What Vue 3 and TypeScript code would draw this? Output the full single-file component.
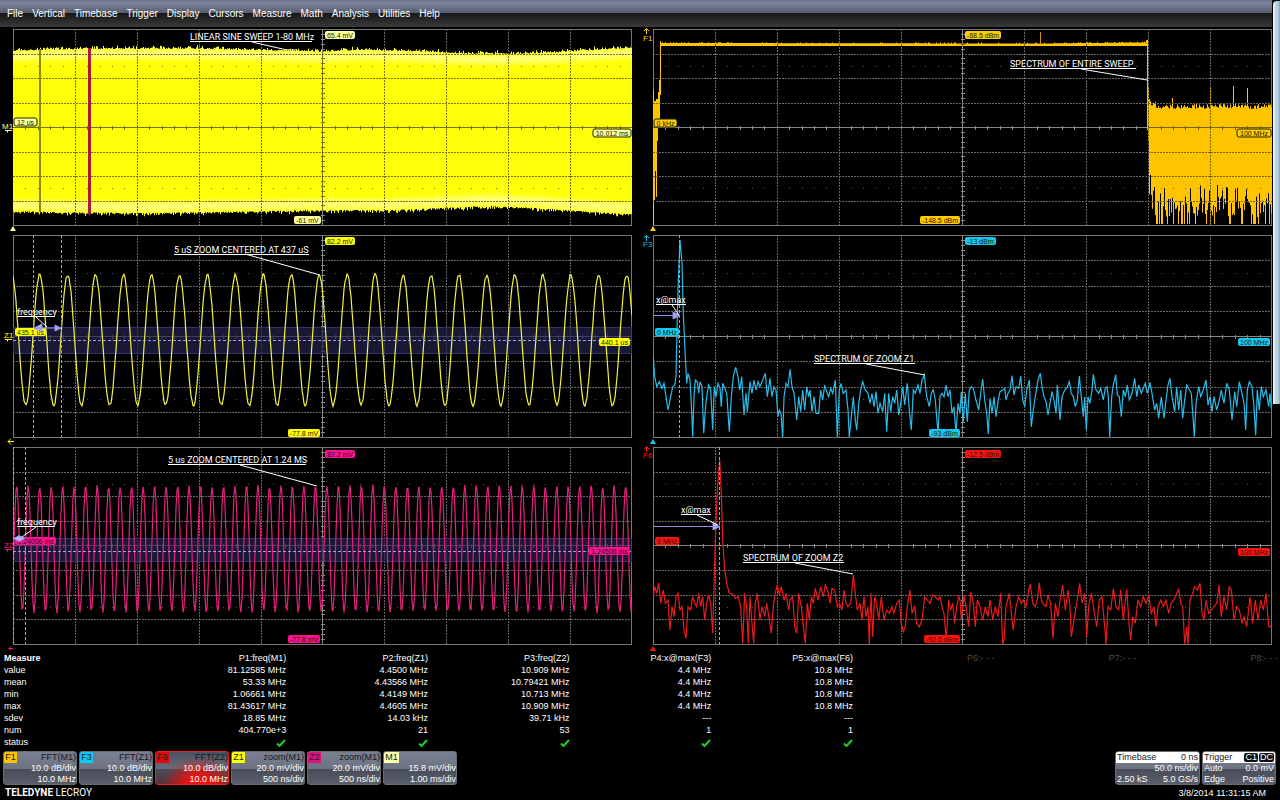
<script setup lang="ts">
interface Tag { x: number; y: number; w: number; text: string; outlined?: boolean }
interface Note { x: number; y: number; w: number; text: string; line: string }
interface Panel {
  id: string
  view: string
  left: number
  top: number
  height: number
  color: string
  tagFill: string
  tags: Tag[]
  notes: Note[]
  trace?: string
  fill?: string
  marker: string
  markerShape: string
  origin: string
  cursors?: number[]
  band?: { y: number; h: number; mid: number }
  arrows?: string[]
}

const WIDTH = 619

function noise(seed: number) {
  let s = seed
  return () => {
    s = (s * 16807) % 2147483647
    return s / 2147483647
  }
}

function at(points: number[][], x: number): number {
  for (let i = 1; i < points.length; i++) {
    const [x0, y0] = points[i - 1]
    const [x1, y1] = points[i]
    if (x <= x1) return y0 + ((y1 - y0) * (x - x0)) / (x1 - x0)
  }
  return points[points.length - 1][1]
}

function sine(period: number, peak: number, mid: number, amp: number, seed: number): string {
  const rand = noise(seed)
  const pts: string[] = []
  for (let x = 13; x <= 632; x += 1) {
    const c = Math.cos((2 * Math.PI * (x - peak)) / period)
    const y = mid - amp * c + (rand() - 0.5) * 3
    pts.push(x + ' ' + y.toFixed(1))
  }
  return 'M' + pts.join('L')
}

// Samples are stored at three units per pixel, measured from an origin.
function spectrum(data: string, ox: number, oy: number): string {
  return 'M' + data.trim().split(/\s+/).map((p) => {
    const [x, y] = p.split(',').map(Number)
    return (ox + x / 3).toFixed(1) + ' ' + (oy + y / 3).toFixed(1)
  }).join('L')
}

const envTop = [[13, 50], [40, 49], [90, 48], [200, 48], [240, 49], [290, 50], [322, 51], [360, 49], [400, 50], [430, 51], [470, 53], [510, 53], [545, 52], [580, 50], [632, 47]]
const envBottom = [[13, 212], [60, 213], [150, 214], [200, 213], [260, 212], [322, 211], [390, 211], [440, 209], [490, 207], [540, 209], [580, 212], [632, 215]]

function envelope(): string {
  const rand = noise(77)
  let d = 'M13 127'
  for (let x = 13; x < 632; x++) d += 'V' + (at(envTop, x) - rand() * rand() * 4 + 1).toFixed(1) + 'H' + (x + 1)
  for (let x = 632; x > 13; x--) d += 'V' + (at(envBottom, x) + rand() * rand() * 4 - 1).toFixed(1) + 'H' + (x - 1)
  return d + 'Z'
}

function glow(points: number[][], dy: number): string {
  return 'M' + points.map(([x, y]) => x + ' ' + (y + dy)).join('L')
}
const glowTop = glow(envTop, 6)
const glowBottom = glow(envBottom, -7)

function sweepSpectrum(): string {
  const rand = noise(4242)
  let d = 'M653 222V90H654V101H656V99H658V92H659V80H660V41H661V43'
  for (let x = 661; x < 1146; x++) d += 'V' + (43 - at([[661, 0], [1040, -0.5], [1147, 0.6]], x) - (rand() > 0.85 ? 0.8 : 0)).toFixed(1) + 'H' + (x + 1)
  d += 'V40H1147V54H1148V88H1149V99H1150'
  for (let x = 1150; x < 1272; x++) {
    let y = 109 - rand() * 5 - (x < 1156 ? 3 : 0)
    if (x === 1172) y = 98
    if (x === 1210 || x === 1247) y = 88
    if (x === 1233) y = 86
    d += 'V' + y.toFixed(1) + 'H' + (x + 1)
  }
  for (let x = 1272; x > 1152; x--) {
    const r = rand()
    const y = r > 0.8 ? 224 : r > 0.4 ? 203 + rand() * 14 : 184 + rand() * 20
    d += 'V' + y.toFixed(1) + 'H' + (x - 1)
  }
  d += 'V195H1151V175H1150V194H1149V142H1148V90H1147V46'
  d += 'H661V47H660V120H658V141H657V197H656V171H655V200H654V225H653Z'
  return d
}

const blue = `280,380 284,440 290,470 298,455 306,475 312,460 318,500 324,540 332,500 338,470 344,465 348,440 351,300 355,150 360,30 366,100 370,250 376,380 380,460 384,430 390,450 394,520 398,620 402,500 406,450 412,455 416,490 420,455 426,470 431,610 436,540 440,500 446,465 452,480 458,600 463,470 468,500 474,460 480,475 484,530 488,460 494,475 500,490 508,605 514,500 520,440 527,412 534,440 539,480 545,440 552,555 558,490 562,545 570,455 576,490 582,450 588,480 594,455 600,470 608,450 616,430 622,500 630,445 636,500 642,470 648,480 654,560 658,540 663,550 668,622 672,500 678,460 684,470 690,418 696,470 702,490 710,570 716,500 722,545 728,480 734,540 740,470 746,500 750,480 756,545 762,500 768,550 776,550 782,480 788,510 794,465 800,485 806,500 812,475 818,490 826,450 832,622 838,480 843,460 850,490 858,480 864,540 868,622 874,560 880,500 886,570 890,600 896,520 902,480 908,455 916,480 924,490 930,520 936,490 942,530 948,485 954,550 960,520 968,545 974,490 980,605 986,490 992,545 998,500 1004,520 1010,480 1016,555 1022,520 1028,470 1034,525 1042,460 1048,540 1054,600 1060,480 1066,490 1074,465 1080,490 1086,450 1093,435 1100,500 1108,530 1114,490 1120,480 1126,510 1134,610 1140,500 1146,490 1152,500 1158,465 1164,500 1170,480 1176,550 1182,530 1188,610 1194,520 1200,550
1204,485 1210,575 1216,490 1222,575 1228,480 1234,470 1240,475 1248,510 1256,540 1262,490 1268,447 1274,510 1280,550 1285,612 1290,505 1296,550 1302,500 1308,560 1314,515 1320,485 1328,480 1334,475 1338,510 1344,490 1350,480 1356,437 1362,495 1368,470 1376,475 1382,438 1388,510 1394,530 1400,480 1408,450 1414,590 1420,540 1426,500 1434,450 1441,430 1446,470 1452,500 1458,515 1464,555 1470,520 1476,485 1482,510 1488,550 1492,465 1500,570 1506,500 1514,480 1520,475 1528,455 1534,490 1540,500 1546,530 1552,510 1558,438 1564,500 1570,560 1574,500 1579,600 1584,500 1590,520 1596,480 1600,433 1608,480 1616,490 1622,475 1630,510 1636,475 1641,470 1645,500 1649,622 1655,500 1660,465 1667,434 1672,495 1678,500 1684,560 1690,480 1696,500 1702,465 1708,510 1716,490 1724,445 1730,500 1736,465 1744,490 1750,475 1756,460 1762,490 1770,458 1776,490 1784,540 1790,520 1796,565 1804,500 1812,565 1818,510 1824,465 1830,445 1836,500 1844,545 1850,470 1856,540 1862,480 1868,565 1874,510 1880,465 1886,475 1894,490 1899,560 1903,620 1908,520 1916,470 1922,500 1930,480 1938,450 1944,525 1950,500 1956,545 1962,500 1970,540 1978,510 1984,480 1992,520 2000,460 2008,480 2016,570 2024,485 2030,530 2038,455 2046,490 2052,520 2057,600 2062,480 2068,455 2076,470 2081,520 2087,616 2092,480 2098,540 2104,470 2110,500 2118,480 2126,530 2130,490 2134,535`

const red = `280,470 284,440 290,460 296,428 302,490 310,450 316,490 324,480 330,570 336,500 342,530 348,470 354,460 360,510 366,500 372,570 378,595 384,500 392,510 398,470 404,490 410,500 416,460 422,500 428,470 434,540 440,490 446,465 452,490 458,580 462,440 466,300 472,150 479,60 484,160 488,300 494,390 500,430 508,460 518,462 526,475 534,470 542,500 548,610 554,460 560,500 565,610 570,470 575,540 581,610 586,490 592,460 600,540 606,500 614,530 620,490 628,540 634,580 640,500 646,460 652,434 658,465 664,440 672,480 678,460 686,510 690,480 698,470 704,560 710,580 716,460 724,500 730,560 736,610 742,490 748,540 754,470 760,490 766,445 774,480 782,440 790,470 796,435 804,455 810,490 816,445 824,450 832,500 838,490 846,510 852,450 858,490 864,500 872,490 880,405 886,460 892,510 900,490 906,540 912,470 918,530 924,500 928,612 933,460 938,590 944,470 950,490 956,540 964,470 972,540 980,510 988,520 996,500 1002,520 1010,490 1018,480 1024,550 1030,575 1036,560 1042,500 1050,450 1056,520 1064,500 1070,550 1078,560 1086,540 1094,470 1102,480 1110,490 1118,465 1126,470 1134,480 1140,470 1146,500 1152,520 1159,600 1166,480 1172,510 1178,490 1184,550 1190,500 1196,470 1200,480
1204,540 1212,465 1218,500 1226,560 1232,455 1240,490 1246,560 1252,480 1260,500 1268,540 1276,500 1284,530 1290,480 1298,540 1306,500 1314,530 1322,460 1328,612 1332,600 1338,500 1348,460 1354,520 1360,570 1368,500 1376,470 1384,490 1390,480 1398,500 1406,450 1411,432 1418,490 1426,500 1432,480 1438,428 1444,480 1452,495 1458,500 1464,465 1472,490 1479,595 1486,490 1494,530 1500,480 1508,435 1516,510 1524,450 1530,500 1534,590 1542,540 1550,490 1559,430 1566,490 1574,460 1580,590 1586,500 1594,460 1602,510 1610,560 1618,480 1626,470 1634,560 1638,612 1644,500 1652,510 1660,446 1668,500 1676,510 1682,450 1690,540 1700,448 1708,560 1712,600 1718,530 1726,550 1734,480 1742,500 1750,470 1758,490 1766,465 1774,520 1782,500 1788,560 1794,500 1802,480 1810,500 1818,480 1826,520 1834,490 1842,480 1850,460 1856,448 1862,490 1868,500 1874,612 1880,560 1884,612 1890,480 1898,460 1904,440 1912,450 1920,430 1926,520 1932,540 1938,480 1946,520 1954,510 1962,500 1970,490 1977,435 1984,530 1992,470 2000,510 2008,440 2014,450 2022,540 2030,500 2038,510 2046,550 2052,530 2060,560 2070,470 2078,550 2086,480 2094,540 2102,480 2110,510 2118,460 2126,560 2134,560`

function gridLines(p: Panel): string {
  let d = ''
  for (let i = 1; i < 10; i++) if (i !== 5) d += `M${Math.round(p.left + i * 61.9)}.5 ${p.top}v${p.height}`
  for (let j = 1; j < 8; j++) if (j !== 4) d += `M${p.left} ${Math.round(p.top + (j * p.height) / 8)}.5h${WIDTH}`
  return d
}

function axes(p: Panel): string {
  const cx = Math.round(p.left + 309) + 0.5
  const cy = Math.floor(p.top + p.height / 2) + 0.5
  let d = `M${cx} ${p.top}v${p.height}M${p.left} ${cy}h${WIDTH}`
  for (let i = 1; i < 50; i++) if (i % 5) d += `M${Math.round(p.left + i * 12.38)}.5 ${cy - 2}v4`
  for (let j = 1; j < 40; j++) if (j % 5) d += `M${cx - 2} ${Math.round(p.top + (j * p.height) / 40)}.5h4`
  return d
}

function dots(p: Panel): string {
  let d = ''
  for (const k of [1.5, 6.5]) {
    const y = Math.round(p.top + (p.height * k) / 8)
    for (let i = 1; i < 50; i++) if (i % 5) d += `M${Math.round(p.left + i * 12.38)} ${y}.5h1`
  }
  return d
}

const up = (y: number) => `M646.5 ${y + 6}v-5M644 ${y + 3}l2.5 -2.5l2.5 2.5`
const foot = (x: number, y: number) => `M${x} ${y}l3 5h-6z`

const panels: Panel[] = [
  {
    id: 'M1', view: '0 28 640 206', left: 13, top: 29, height: 196, color: '#ffff0a', tagFill: '#ffff9c',
    fill: envelope(), marker: '2,129', markerShape: 'M5 130.5h7M7.5 130.5v2', origin: foot(13, 226),
    tags: [
      { x: 325, y: 31, w: 30, text: '65.4 mV' }, { x: 294, y: 216, w: 27, text: '-61 mV' },
      { x: 14, y: 118, w: 23, text: '12 us', outlined: true }, { x: 593, y: 129, w: 38, text: '10.012 ms', outlined: true },
    ],
    notes: [{ x: 190, y: 40, w: 122, text: 'LINEAR SINE SWEEP 1-80 MHz', line: 'M252 42L287 50H296' }],
  },
  {
    id: 'F1', view: '640 28 640 206', left: 653, top: 29, height: 196, color: '#ffc400', tagFill: '#ffcc00',
    fill: sweepSpectrum(), marker: '643,41', markerShape: up(28), origin: foot(653, 226),
    tags: [
      { x: 965, y: 31, w: 36, text: '-68.5 dBm' }, { x: 920, y: 216, w: 40, text: '-148.5 dBm' },
      { x: 654, y: 119, w: 23, text: '0 kHz', outlined: true }, { x: 1237, y: 129, w: 34, text: '100 MHz', outlined: true },
    ],
    notes: [{ x: 1010, y: 67, w: 126, text: 'SPECTRUM OF ENTIRE SWEEP', line: 'M1081 69L1147 80' }],
  },
  {
    id: 'Z1', view: '0 234 640 212', left: 13, top: 235, height: 202, color: '#f4f440', tagFill: '#ffff00',
    trace: sine(27.95, 39.7, 340, 65, 11), marker: '4,338', markerShape: 'M5 339.5h7M7.5 339.5v2', origin: 'M14 441.5h-6M11 438.5l-3 3l3 3',
    cursors: [33, 61], band: { y: 327, h: 27, mid: 340 },
    arrows: ['M34 328H61M42 324L34 328L42 332ZM55 325L61 328L55 331Z'],
    tags: [
      { x: 325, y: 237, w: 30, text: '82.2 mV' }, { x: 288, y: 429, w: 32, text: '-77.8 mV' },
      { x: 15, y: 328, w: 31, text: '435.1 us' }, { x: 599, y: 338, w: 31, text: '440.1 us' },
    ],
    notes: [
      { x: 174, y: 253, w: 135, text: '5 uS ZOOM CENTERED AT 437 uS', line: 'M245 254L320 275' },
      { x: 17, y: 315, w: 38, text: 'frequency', line: 'M36 317L47 327' },
    ],
  },
  {
    id: 'F3', view: '640 234 640 212', left: 653, top: 235, height: 202, color: '#28bce8', tagFill: '#12c8f0',
    trace: spectrum(blue, 560, 230), marker: '643,247', markerShape: up(235), origin: foot(653, 439),
    cursors: [679], arrows: ['M653 315.5H680M673 312L680 315.5L673 319Z'],
    tags: [
      { x: 965, y: 237, w: 31, text: '-13 dBm' }, { x: 929, y: 429, w: 31, text: '-93 dBm' },
      { x: 655, y: 328, w: 24, text: '0 MHz' }, { x: 1238, y: 338, w: 32, text: '100 MHz' },
    ],
    notes: [
      { x: 814, y: 362, w: 101, text: 'SPECTRUM OF ZOOM Z1', line: 'M866 364L925 375' },
      { x: 656, y: 303, w: 30, text: 'x@max', line: 'M672 305L679 315' },
    ],
  },
  {
    id: 'Z2', view: '0 446 640 206', left: 13, top: 447, height: 197, color: '#e4207e', tagFill: '#ff1090',
    trace: sine(11.49, 16.7, 549, 63, 29), marker: '4,548', markerShape: 'M5 549.5h7M7.5 549.5v2', origin: 'M13 648.5h-4M11 646.5l-2 2l2 2',
    cursors: [13, 25], band: { y: 538, h: 24, mid: 551 },
    arrows: ['M14 538.5L19 535.5L25 538.5L19 541.5Z'],
    tags: [
      { x: 325, y: 450, w: 30, text: '82.2 mV' }, { x: 288, y: 635, w: 32, text: '-77.8 mV' },
      { x: 15, y: 537, w: 41, text: '1.24006 ms' }, { x: 589, y: 547, w: 41, text: '1.24506 ms' },
    ],
    notes: [
      { x: 168, y: 463, w: 138, text: '5 us ZOOM CENTERED AT 1.24 MS', line: 'M240 465L317 486' },
      { x: 17, y: 525, w: 38, text: 'frequency', line: 'M36 527L22 537' },
    ],
  },
  {
    id: 'F6', view: '640 446 640 206', left: 653, top: 447, height: 197, color: '#e81c1c', tagFill: '#ff1010',
    trace: spectrum(red, 560, 440), marker: '643,458', markerShape: up(446), origin: foot(653, 646),
    cursors: [719], arrows: ['M653 526.5H720M713 523L720 526.5L713 530Z'],
    tags: [
      { x: 965, y: 450, w: 36, text: '-12.5 dBm' }, { x: 924, y: 635, w: 36, text: '-92.5 dBm' },
      { x: 655, y: 537, w: 24, text: '0 MHz' }, { x: 1238, y: 548, w: 32, text: '100 MHz' },
    ],
    notes: [
      { x: 743, y: 561, w: 101, text: 'SPECTRUM OF ZOOM Z2', line: 'M795 563L853 574' },
      { x: 681, y: 513, w: 30, text: 'x@max', line: 'M697 515L718 525' },
    ],
  },
]

const menus = ['File', 'Vertical', 'Timebase', 'Trigger', 'Display', 'Cursors', 'Measure', 'Math', 'Analysis', 'Utilities', 'Help']
const heads = ['P1:freq(M1)', 'P2:freq(Z1)', 'P3:freq(Z2)', 'P4:x@max(F3)', 'P5:x@max(F6)', 'P6:- - -', 'P7:- - -', 'P8:- - -']
const rows: { name: string; cells: string[] }[] = [
  { name: 'value', cells: ['81.12585 MHz', '4.4500 MHz', '10.909 MHz', '4.4 MHz', '10.8 MHz'] },
  { name: 'mean', cells: ['53.33 MHz', '4.43566 MHz', '10.79421 MHz', '4.4 MHz', '10.8 MHz'] },
  { name: 'min', cells: ['1.06661 MHz', '4.4149 MHz', '10.713 MHz', '4.4 MHz', '10.8 MHz'] },
  { name: 'max', cells: ['81.43617 MHz', '4.4605 MHz', '10.909 MHz', '4.4 MHz', '10.8 MHz'] },
  { name: 'sdev', cells: ['18.85 MHz', '14.03 kHz', '39.71 kHz', '---', '---'] },
  { name: 'num', cells: ['404.770e+3', '21', '53', '1', '1'] },
]
const chips = [
  { id: 'F1', fn: 'FFT(M1)', a: '10.0 dB/div', b: '10.0 MHz' },
  { id: 'F3', fn: 'FFT(Z1)', a: '10.0 dB/div', b: '10.0 MHz' },
  { id: 'F6', fn: 'FFT(Z2)', a: '10.0 dB/div', b: '10.0 MHz' },
  { id: 'Z1', fn: 'zoom(M1)', a: '20.0 mV/div', b: '500 ns/div' },
  { id: 'Z2', fn: 'zoom(M1)', a: '20.0 mV/div', b: '500 ns/div' },
  { id: 'M1', fn: '', a: '15.8 mV/div', b: '1.00 ms/div' },
]
</script>

<template>
  <div class="scope">
    <nav class="menu">
      <button v-for="m in menus" :key="m" type="button">{{ m }}</button>
    </nav>
    <div class="edge" aria-hidden="true"></div>

    <main class="plots">
      <svg v-for="p in panels" :key="p.id" :viewBox="p.view" class="plot">
        <defs>
          <clipPath v-if="p.fill" :id="'area-' + p.id"><path :d="p.fill" /></clipPath>
          <clipPath :id="'frame-' + p.id"><rect :x="p.left" :y="p.top" :width="WIDTH" :height="p.height" /></clipPath>
        </defs>
        <path class="dots" :d="dots(p)" />
        <path class="grid" :d="gridLines(p)" />
        <path class="axis" :d="axes(p)" />
        <rect class="frame" :x="p.left + 0.5" :y="p.top + 0.5" :width="WIDTH - 1" :height="p.height" />

        <template v-if="p.band">
          <rect class="band" :x="p.left" :y="p.band.y" :width="WIDTH" :height="p.band.h" />
          <path class="band-edge" :d="`M${p.left} ${p.band.y}.5h${WIDTH}m-${WIDTH} ${p.band.h - 1}h${WIDTH}`" />
        </template>

        <template v-if="p.fill">
          <path :d="p.fill" :fill="p.color" />
          <g v-if="p.id === 'M1'" clip-path="url(#area-M1)">
            <path class="glow" :d="glowTop" stroke-width="14" />
            <path class="glow" :d="glowTop" stroke-width="10" />
            <path class="glow" :d="glowTop" stroke-width="6" />
            <path class="glow" :d="glowTop" stroke-width="3" />
            <path class="glow" :d="glowBottom" stroke-width="14" />
            <path class="glow" :d="glowBottom" stroke-width="10" />
            <path class="glow" :d="glowBottom" stroke-width="6" />
            <path class="glow" :d="glowBottom" stroke-width="3" />
          </g>
          <g :clip-path="`url(#area-${p.id})`" class="over">
            <path class="dots" :d="dots(p)" />
            <path class="grid" :d="gridLines(p)" />
            <path class="axis" :d="axes(p)" />
          </g>
          <template v-if="p.id === 'M1'">
            <rect x="39" y="49" width="2" height="163" fill="#8c8c00" />
            <rect x="88" y="48" width="3" height="166" fill="#a81c38" />
          </template>
          <template v-else>
            <path d="M660.5 41V95M1147.5 40V130" :stroke="p.color" />
            <rect x="1040" y="32" width="1" height="12" fill="#d09800" />
          </template>
        </template>

        <path v-if="p.trace" class="trace" :d="p.trace" :stroke="p.color" :clip-path="`url(#frame-${p.id})`" />
        <path v-if="p.band" class="cursor" :d="`M${p.left} ${p.band.mid}.5h${WIDTH}`" />
        <path v-for="c in p.cursors" :key="c" class="cursor" :d="`M${c}.5 ${p.top}v${p.height}`" />

        <g v-for="t in p.tags" :key="t.text">
          <rect :x="t.x" :y="t.y" :width="t.w" height="8" rx="2" :fill="p.tagFill" :class="{ outlined: t.outlined }" />
          <text class="tag" :x="t.x + t.w / 2" :y="t.y + 7">{{ t.text }}</text>
        </g>
        <path v-for="a in p.arrows" :key="a" class="arrow" :d="a" />
        <g v-for="n in p.notes" :key="n.text">
          <text class="note" :x="n.x" :y="n.y">{{ n.text }}</text>
          <path class="underline" :d="`M${n.x} ${n.y + 1}.5h${n.w}`" />
          <path class="lead" :d="n.line" />
        </g>

        <text class="mark" :x="p.marker.split(',')[0]" :y="p.marker.split(',')[1]" :fill="p.tagFill">{{ p.id }}</text>
        <path :d="p.markerShape" fill="none" :stroke="p.tagFill" />
        <path :d="p.origin" :fill="p.id[0] === 'Z' ? 'none' : p.tagFill" :stroke="p.id[0] === 'Z' ? p.tagFill : 'none'" />
      </svg>
    </main>

    <table class="measure">
      <thead>
        <tr>
          <th scope="col" class="name">Measure</th>
          <th v-for="(h, i) in heads" :key="h" scope="col" :class="{ idle: i > 4 }">{{ h }}</th>
        </tr>
      </thead>
      <tbody>
        <tr v-for="r in rows" :key="r.name">
          <th scope="row">{{ r.name }}</th>
          <td v-for="(c, i) in r.cells" :key="i">{{ c }}</td>
          <td colspan="3"></td>
        </tr>
        <tr>
          <th scope="row">status</th>
          <td v-for="i in 5" :key="i">
            <svg class="ok" viewBox="0 0 10 8" role="img" aria-label="ok"><path d="M1 4.5L3.5 7L9 1" /></svg>
          </td>
          <td colspan="3"></td>
        </tr>
      </tbody>
    </table>

    <div class="status">
      <button v-for="c in chips" :key="c.id" type="button" class="chip" :class="c.id">
        <span class="line"><span class="badge">{{ c.id }}</span><span class="fn">{{ c.fn }}</span></span>
        <span class="value">{{ c.a }}</span>
        <span class="value">{{ c.b }}</span>
      </button>
      <button type="button" class="chip info timebase">
        <span class="line head"><span>Timebase</span><span>0 ns</span></span>
        <span class="value">50.0 ns/div</span>
        <span class="line"><span>2.50 kS</span><span>5.0 GS/s</span></span>
      </button>
      <button type="button" class="chip info trigger">
        <span class="line head"><span>Trigger</span><span class="flags"><span>C1</span><span>DC</span></span></span>
        <span class="line"><span>Auto</span><span>0.0 mV</span></span>
        <span class="line"><span>Edge</span><span>Positive</span></span>
      </button>
    </div>

    <footer class="foot">
      <span class="brand"><b>TELEDYNE</b> LECROY</span>
      <time>3/8/2014 11:31:15 AM</time>
    </footer>
  </div>
</template>

<style>
body {
  background: #000;
}
</style>

<style scoped>
.scope {
  position: relative;
  background: #000;
  color: #fff;
  font: 9px/12px "Liberation Sans", Arial, sans-serif;
}
button {
  margin: 0;
  border: 0;
  padding: 0;
  background: none;
  color: inherit;
  font: inherit;
}
.menu {
  display: flex;
  gap: 9px;
  height: 28px;
  box-sizing: border-box;
  padding: 0 7px;
  margin-right: 8px;
  font-size: 10px;
  background: linear-gradient(#66718a, #7c8499 3px, #555c6e 13px, #15171b 13px, #1c1c1c 15px, #3a3a3a 27px, #000 27px);
}
.edge {
  position: absolute;
  top: 1px;
  right: 0;
  width: 7px;
  height: 403px;
  border-radius: 4px 0 0 0;
  background: linear-gradient(90deg, #eef5fa 1px, #c2d8e6 2px, #b4cddd 5px, #7fa3ba);
}
.plots {
  display: grid;
  grid-template-columns: 1fr 1fr;
}
.plot {
  display: block;
  width: 100%;
}
.grid {
  fill: none;
  stroke: #686868;
  stroke-dasharray: 2 1;
  shape-rendering: crispEdges;
}
.axis {
  fill: none;
  stroke: #888;
  shape-rendering: crispEdges;
}
.dots {
  stroke: #555;
  shape-rendering: crispEdges;
}
.frame {
  fill: none;
  stroke: #777;
  shape-rendering: crispEdges;
}
.over path {
  stroke: #4a4400;
  opacity: 0.75;
}
.glow {
  fill: none;
  stroke: #ffffc8;
  opacity: 0.2;
}
.band {
  fill: #23234c;
  opacity: 0.7;
}
.band-edge {
  fill: none;
  stroke: #34346a;
}
.trace {
  fill: none;
  stroke-width: 1.2;
}
.cursor {
  fill: none;
  stroke: #9c9cf4;
  stroke-dasharray: 3 2;
  shape-rendering: crispEdges;
}
.arrow {
  fill: #b4b4ff;
  stroke: #9090e8;
}
.outlined {
  stroke: #222200;
}
.tag {
  font-size: 7px;
  text-anchor: middle;
  fill: #1a1a00;
}
.note {
  font-family: Roboto, "Liberation Sans", sans-serif;
  font-size: 9px;
  fill: #fff;
}
.underline {
  stroke: #fff;
}
.lead {
  fill: none;
  stroke: #fff;
}
.mark {
  font-size: 8px;
}
.measure {
  width: calc(100% - 2px);
  table-layout: fixed;
  border-collapse: collapse;
}
.measure th,
.measure td {
  height: 12px;
  padding: 0;
  text-align: right;
  font-weight: 400;
  white-space: nowrap;
}
.measure th:first-child {
  width: 11%;
  padding-left: 4px;
  text-align: left;
}
.measure .name {
  font-weight: 700;
}
.measure .idle {
  color: #4c4c4c;
}
.ok {
  display: inline-block;
  width: 10px;
  height: 8px;
  vertical-align: middle;
}
.ok path {
  fill: none;
  stroke: #1ed030;
  stroke-width: 2;
}
.status {
  display: flex;
  gap: 2px;
  padding: 3px 4px 0 3px;
}
.chip {
  display: flex;
  flex-direction: column;
  width: 74px;
  height: 34px;
  box-sizing: border-box;
  border: 1px solid #6c6c70;
  border-radius: 3px;
  overflow: hidden;
  line-height: 11px;
  text-align: right;
  background: linear-gradient(#7b8090, #6d7282 17px, #484c58 17px, #5a5e6a);
}
.line {
  display: flex;
  justify-content: space-between;
  min-height: 11px;
}
.value {
  display: block;
}
.badge {
  width: 13px;
  line-height: 10px;
  text-align: center;
  background: #ffc400;
  color: #222;
}
.fn {
  color: #14161e;
}
.F3 .badge {
  background: #10c8f4;
}
.F6 .badge {
  background: #e00808;
}
.Z1 .badge {
  background: #ffff00;
}
.Z2 .badge {
  background: #e0107c;
}
.M1 .badge {
  width: 15px;
  background: #ffffb0;
}
.F6 {
  border-color: #f02020;
  background: radial-gradient(ellipse at 60% 110%, #f01010 20%, transparent 60%), linear-gradient(#4c5260, #6a6c78 17px, #484c58 17px, #5a3038);
}
.info .line,
.info .value {
  padding: 0 1px;
}
.info .head {
  background: #fff;
  color: #222;
}
.timebase {
  width: 85px;
  margin-left: auto;
}
.trigger {
  width: 74px;
}
.flags {
  display: flex;
  gap: 1px;
}
.flags span {
  margin: 1px 0;
  border-radius: 2px;
  padding: 0 1px;
  line-height: 9px;
  background: #111;
  color: #fff;
}
.foot {
  display: flex;
  justify-content: space-between;
  align-items: center;
  height: 15px;
  padding: 0 14px 0 5px;
}
.brand {
  font-family: Roboto, "Liberation Sans", sans-serif;
  font-size: 10px;
}
</style>
